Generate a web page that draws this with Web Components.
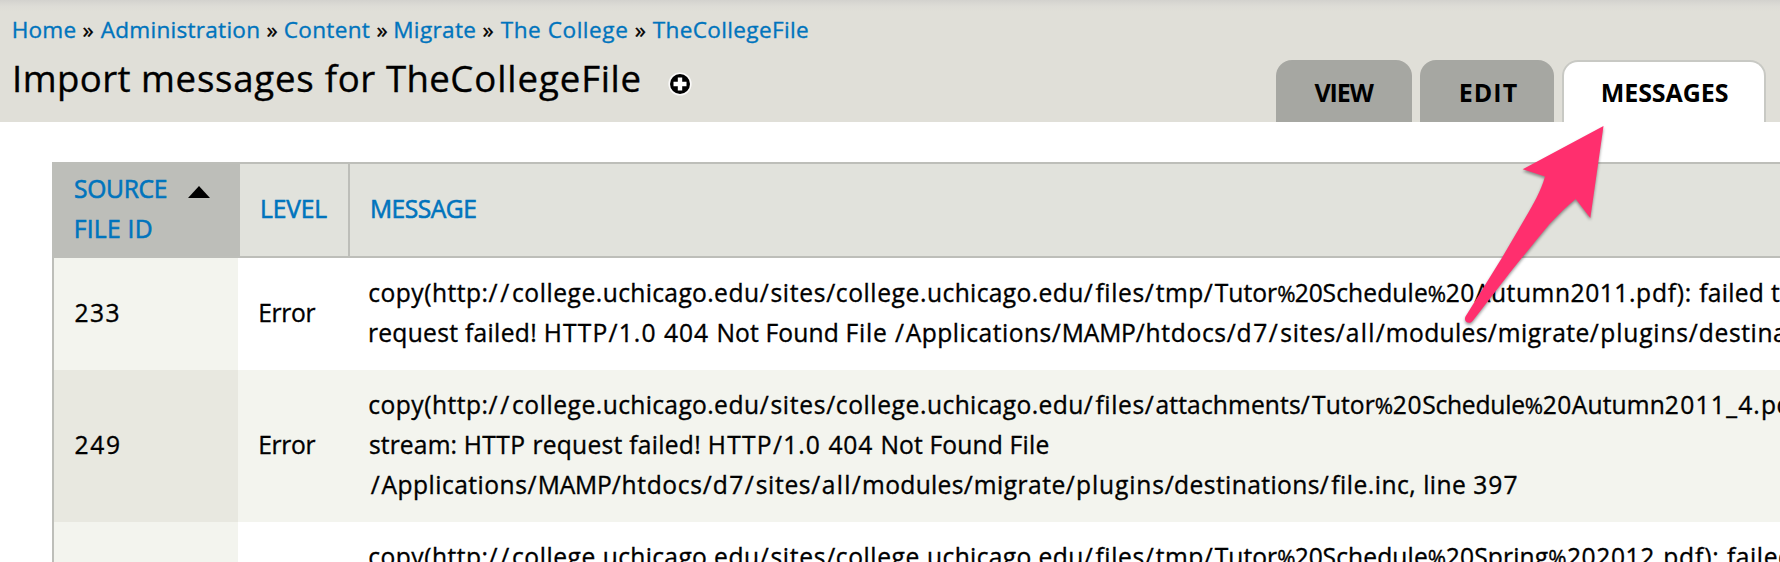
<!DOCTYPE html>
<html lang="en">
<head>
<meta charset="utf-8">
<title>Import messages for TheCollegeFile</title>
<style>
html,body{margin:0;padding:0;background:#fff}
body{font-family:"Open Sans","Noto Sans",sans-serif;color:#000;width:1780px;height:562px;overflow:hidden}
</style>
</head>
<body>
<migrate-page></migrate-page>
<script>
const ctx = document.createElement('canvas').getContext('2d');

/* A line of text whose runs are tracked so each one starts at its stop (page x).
   runs="a|b|c" stops="x0 x1 x2 [end]" links="0 2" */
class TrackedLine extends HTMLElement {
  connectedCallback() {
    const root = this.attachShadow({mode: 'open'});
    root.innerHTML = '<style>:host{display:block;white-space:pre;font-kerning:none;font-variant-ligatures:none;-webkit-text-stroke:var(--stroke,.35px)}a{color:#0074bd;text-decoration:none}.pct{font-size:.9em;line-height:0}</style>';
    const runs = this.getAttribute('runs').split('|');
    const stops = this.getAttribute('stops').trim().split(/\s+/).map(Number);
    const links = (this.getAttribute('links') || '').split(' ');
    const cs = getComputedStyle(this);
    const size = parseFloat(cs.fontSize);
    const m = runs.map(r => {
      ctx.font = `${cs.fontWeight} ${r === '%' ? size * .9 : size}px ${cs.fontFamily}`;
      ctx.fontKerning = 'none';
      return ctx.measureText(r);
    });
    const origin = i => stops[i] + m[i].actualBoundingBoxLeft + .7;
    const left = this.getBoundingClientRect().left;
    runs.forEach((r, i) => {
      const el = document.createElement(links.includes(String(i)) ? 'a' : 'span');
      el.textContent = r;
      if (r === '%') el.className = 'pct';
      let room = null, n = r.length;
      if (i + 1 < runs.length) room = origin(i + 1) - origin(i) - m[i].width;
      else if (stops.length > runs.length) {
        room = stops[i + 1] + .4 - origin(i) - m[i].actualBoundingBoxRight;
        n = Math.max(1, n - 1);
      }
      el.style.letterSpacing = (room === null ? 0.6 : room / n).toFixed(3) + 'px';
      if (i === 0) el.style.marginLeft = (origin(0) - left).toFixed(2) + 'px';
      root.append(el);
    });
  }
}

class PageTab extends HTMLElement {
  connectedCallback() {
    this.attachShadow({mode: 'open'}).innerHTML = `<style>
:host{display:block;box-sizing:border-box;height:62px;background:#a6a7a2;border-radius:16px 16px 0 0;font-weight:700;font-size:25px;line-height:40px;padding-top:12px;--stroke:0}
:host([active]){background:#fff;border:2px solid #c8c9c4;border-bottom:0;padding-top:10px}
</style><slot></slot>`;
  }
}

class PageHeader extends HTMLElement {
  connectedCallback() {
    this.attachShadow({mode: 'open'}).innerHTML = `<style>
:host{display:flex;justify-content:space-between;box-sizing:border-box;height:122px;padding-right:14px;background:linear-gradient(#d3d2ce,#dddcd6 6px,#e0dfd8 12px)}
.crumbs{font-size:22.6px;line-height:32px;padding-top:14px}
.title{display:grid;margin-top:7px}.title>*{grid-area:1/1}
.title tracked-line{font-size:36.6px;line-height:50px}
.main{width:900px}
svg{display:block;margin:19px 0 0 668px}
nav{display:grid;grid-template-columns:136px 134px 204px;column-gap:8px;align-self:end}
</style>
<div class="main">
<tracked-line class="crumbs" links="0 2 4 6 8 10" runs="Home |» |Administration |» |Content |» |Migrate |» |The College |» |TheCollegeFile" stops="13 81.7 100 265.7 284 375.7 394.5 481.7 500 634 652 807.5"></tracked-line>
<div class="title">
<tracked-line runs="Import |messages |for |The|College|File" stops="14.3 143.3 324 385.3 451.5 583.5 639"></tracked-line>
<svg width="24" height="24" viewBox="0 0 24 24"><circle cx="12" cy="12" r="11.6" fill="#fff" opacity=".85"/><circle cx="12" cy="12" r="10" fill="#000"/><path d="M12 5.5v13M5.5 12h13" stroke="#fff" stroke-width="4.4"/></svg>
</div></div>
<nav>
<page-tab><tracked-line runs="VIEW" stops="1313.7 1374.3"></tracked-line></page-tab>
<page-tab><tracked-line runs="EDIT" stops="1460 1516.3"></tracked-line></page-tab>
<page-tab active><tracked-line runs="MESSAGES" stops="1602 1727.3"></tracked-line></page-tab>
</nav>`;
  }
}

class MessageRow extends HTMLElement {
  connectedCallback() {
    this.attachShadow({mode: 'open'}).innerHTML = `<style>
:host{display:grid;grid-template-columns:184px 112px 1fr;background:#fff}
:host([even]){background:#f3f4ee}
.id{background:#f3f4ee}
:host([even]) .id{background:#e8e8e0}
div{display:flex;flex-direction:column;justify-content:center;padding:15px 0 17px;line-height:40px;min-width:0}
</style><div class="id"><slot name="id"></slot></div><div><slot name="level"></slot></div><div><slot></slot></div>`;
  }
}

class MessageTable extends HTMLElement {
  connectedCallback() {
    this.attachShadow({mode: 'open'}).innerHTML = `<style>
:host{display:block;margin:40px 0 0 52px;border:2px solid #bdbeb9;border-width:2px 0 0 2px;font-size:24.6px}
.head{display:grid;grid-template-columns:186px 110px 1fr;height:92px;border-bottom:2px solid #bdbeb9;background:#e1e2dc;line-height:40px;--stroke:.6px}
.head>div{display:flex;flex-direction:column;justify-content:center;padding-bottom:2px}
.sorted{background:#bdbeb9}
.level{border-right:2px solid #bdbeb9}
.first{display:grid}.first>*{grid-area:1/1}
svg{display:block;margin:17px 0 0 134px}
</style>
<div class="head">
<div class="sorted"><div class="first"><tracked-line links="0" runs="SOURCE" stops="74.3 166.3"></tracked-line><svg width="22" height="12" viewBox="0 0 22 12"><path d="M11 0 22 12H0Z"/></svg></div><tracked-line links="0" runs="FILE ID" stops="75 151.3"></tracked-line></div>
<div class="level"><tracked-line links="0" runs="LEVEL" stops="261.3 326.8"></tracked-line></div>
<div><tracked-line links="0" runs="MESSAGE" stops="371.3 475.8"></tracked-line></div>
</div><slot></slot>`;
  }
}

class PointerArrow extends HTMLElement {
  connectedCallback() {
    this.attachShadow({mode: 'open'}).innerHTML = `<style>
:host{display:block;position:absolute;left:1450px;top:120px;width:170px;height:220px;filter:drop-shadow(0 2px 1.5px rgba(0,0,0,.4))}
svg{display:block}
</style><svg width="170" height="220" viewBox="1450 120 170 220"><path fill="#ff2f6e" d="M1603.5 126 1522.7 169.300 1545 176.500C1541 191 1533 205 1525.500 217.500L1501.500 258.500 1465.500 316.500C1463 321.500 1469.500 325.500 1473 320.500C1490 299 1506 277 1522.500 257C1533 244.500 1541 234 1550 223.500C1559 214 1567 206 1575.700 199L1590.300 218Z"/></svg>`;
  }
}

const urlRuns = 'copy(http:|//|college.|uchicago.|edu|/|sites|/|college.|uchicago.|edu|/|files|/';
const urlStops = '368.6 487.7 512.3 603 714.3 759 770.7 825.5 836 927.3 1038.7 1083 1094.7 1144';

class MigratePage extends HTMLElement {
  connectedCallback() {
    this.attachShadow({mode: 'open'}).innerHTML = `<style>
:host{display:block;position:relative;width:1780px;height:562px;overflow:hidden}
</style>
<page-header></page-header>
<message-table>
<message-row>
<tracked-line slot="id" runs="233" stops="74.9 118"></tracked-line>
<tracked-line slot="level" runs="Error" stops="259.5 315"></tracked-line>
<tracked-line runs="${urlRuns}|tmp|/|Tutor|%|20|Schedule|%|20|Autumn|2011|.pdf): |failed |to" stops="${urlStops} 1155 1203 1214 1277.3 1295 1322.7 1428 1446 1474 1570.7 1629 1698.3 1770"></tracked-line>
<tracked-line runs="request |failed! |HTTP/|1.0 |404 |Not |Found |File |/|Applications|/|MAMP|/|htdocs|/|d7|/|sites|/|all|/|modules|/|migrate|/|plugins|/|destinations" stops="369.2 464.3 545 620 663.3 717.7 766.7 846.7 894.3 905 1051 1063 1135 1146.7 1226 1236.7 1268 1280.5 1335 1346 1375 1387 1487 1499 1589 1601.5 1688 1699"></tracked-line>
</message-row>
<message-row even>
<tracked-line slot="id" runs="249" stops="74.9 118.5"></tracked-line>
<tracked-line slot="level" runs="Error" stops="259.5 315"></tracked-line>
<tracked-line runs="${urlRuns}|attachments|/|Tutor|%|20|Schedule|%|20|Autumn|2011|_|4|.|pdf" stops="${urlStops} 1155.7 1300 1311.3 1375 1393 1422.3 1525 1543 1571 1665 1724.3 1737.3 1753.3 1762"></tracked-line>
<tracked-line runs="stream: |HTTP |request |failed! |HTTP/|1.0 |404 |Not |Found |File" stops="369.2 465 533.7 628.5 709 784.5 827.7 881.7 930.7 1010.7 1048"></tracked-line>
<tracked-line runs="/|Applications|/|MAMP|/|htdocs|/|d7|/|sites|/|all|/|modules|/|migrate|/|plugins|/|destinations|/|file.inc, |line |397" stops="370 380.7 526.7 539 611 622.7 702 713 744 756 810.5 822 851 863.3 963 975 1065 1077.3 1164 1174.3 1319 1330.3 1424.3 1473.3 1516"></tracked-line>
</message-row>
<message-row>
<tracked-line runs="${urlRuns}|tmp|/|Tutor|%|20|Schedule|%|20|Spring|%|202012|.|pdf): |failed" stops="${urlStops} 1155 1203 1214 1277.3 1295 1322.7 1428 1446 1474.3 1548.3 1567 1655 1664.3 1726"></tracked-line>
</message-row>
</message-table>
<pointer-arrow></pointer-arrow>`;
  }
}

customElements.define('page-tab', PageTab);
customElements.define('page-header', PageHeader);
customElements.define('message-row', MessageRow);
customElements.define('message-table', MessageTable);
customElements.define('pointer-arrow', PointerArrow);
customElements.define('migrate-page', MigratePage);
customElements.define('tracked-line', TrackedLine);
</script>
</body>
</html>
